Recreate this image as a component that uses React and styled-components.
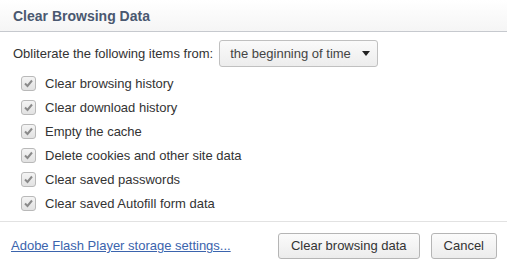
import React from 'react';
import styled, { createGlobalStyle } from 'styled-components';

const Global = createGlobalStyle`
  html, body { margin: 0; padding: 0; background: #fff; }
  body { font-family: "Liberation Sans", Arial, sans-serif; font-size: 13px; color: #333; }
`;

const Dialog = styled.div`
  width: 507px;
  height: 270px;
  display: flex;
  flex-direction: column;
  background: #fff;
`;

const Header = styled.div`
  height: 32px;
  box-sizing: border-box;
  padding: 0 13px;
  display: flex;
  align-items: center;
  background: linear-gradient(#fff, #f5f5f5);
  border-bottom: 1px solid #c6c9ce;
  font-weight: bold;
  font-size: 14px;
  color: #4a5870;
`;

const Body = styled.div`
  flex: 1;
  padding: 8px 13px 0;
`;

const FromRow = styled.div`
  display: flex;
  align-items: center;
  gap: 6px;
  height: 27px;
  margin-bottom: 4px;
`;

const Select = styled.div`
  height: 27px;
  box-sizing: border-box;
  padding: 0 7px 0 10px;
  display: flex;
  align-items: center;
  gap: 11px;
  border: 1px solid #c0c0c0;
  border-radius: 3px;
  background: linear-gradient(#fafafa, #ededed);
  color: #444;
`;

const Caret = styled.span`
  width: 0;
  height: 0;
  border-left: 4px solid transparent;
  border-right: 4px solid transparent;
  border-top: 5px solid #222;
`;

const List = styled.div`
  display: flex;
  flex-direction: column;
  padding-left: 8px;
`;

const Item = styled.label`
  height: 24px;
  display: flex;
  align-items: center;
  gap: 9px;
`;

const Box = styled.span`
  width: 13px;
  height: 13px;
  border: 1px solid #b9b9b9;
  border-radius: 3px;
  background: linear-gradient(#f4f4f4, #e2e2e2);
  display: flex;
  align-items: center;
  justify-content: center;
`;

const Footer = styled.div`
  height: 48px;
  box-sizing: border-box;
  border-top: 1px solid #e2e2e2;
  margin-bottom: 1px;
  padding: 0 10px 0 11px;
  display: flex;
  align-items: center;
  gap: 11px;
`;

const Link = styled.a`
  color: #3b64ad;
  text-decoration: underline;
  margin-right: auto;
`;

const Button = styled.button`
  font: inherit;
  color: #333;
  height: 26px;
  padding: 0 12px;
  border: 1px solid #b5b5b5;
  border-radius: 3px;
  background: linear-gradient(#fbfbfb, #ececec);
  min-width: ${p => p.min || 0}px;
`;

const Check = () => (
  <Box>
    <svg width="11" height="11" viewBox="0 0 11 11">
      <path d="M2 5.5 L4.5 8 L9 2.5" fill="none" stroke="#8a8a8a" strokeWidth="2" />
    </svg>
  </Box>
);

const items = [
  'Clear browsing history',
  'Clear download history',
  'Empty the cache',
  'Delete cookies and other site data',
  'Clear saved passwords',
  'Clear saved Autofill form data',
];

export default function App() {
  return (
    <Dialog>
      <Global />
      <Header>Clear Browsing Data</Header>
      <Body>
        <FromRow>
          <span>Obliterate the following items from:</span>
          <Select>
            the beginning of time
            <Caret />
          </Select>
        </FromRow>
        <List>
          {items.map(t => (
            <Item key={t}>
              <Check />
              {t}
            </Item>
          ))}
        </List>
      </Body>
      <Footer>
        <Link href="#">Adobe Flash Player storage settings...</Link>
        <Button min={141}>Clear browsing data</Button>
        <Button min={66}>Cancel</Button>
      </Footer>
    </Dialog>
  );
}
